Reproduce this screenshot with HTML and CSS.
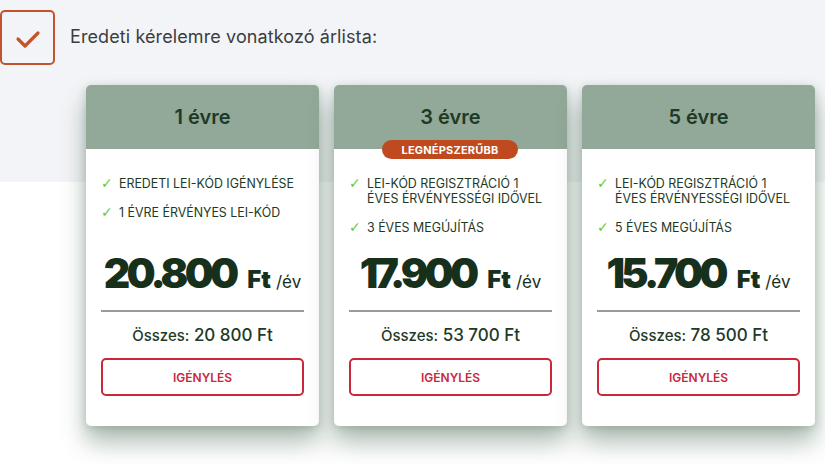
FILE: index.html
```html
<!DOCTYPE html>
<html lang="hu">
<head>
<meta charset="utf-8">
<title>Árlista</title>
<link rel="stylesheet" href="styles.css">
</head>
<body>
<div class="page">
  <div class="intro">
    <div class="checkbox">
      <svg width="26" height="20" viewBox="0 0 26 20"><path d="M3 10 L10 17 L23 4" fill="none" stroke="#c4532b" stroke-width="3.2" stroke-linecap="round" stroke-linejoin="round"/></svg>
    </div>
    <div class="intro-text">Eredeti kérelemre vonatkozó árlista:</div>
  </div>
  <div class="cards">
    <div class="card">
      <div class="card-head">1 évre</div>
      <div class="card-body">
        <ul class="features">
          <li><span class="tick">✓</span><span>EREDETI LEI-KÓD IGÉNYLÉSE</span></li>
          <li><span class="tick">✓</span><span>1 ÉVRE ÉRVÉNYES LEI-KÓD</span></li>
        </ul>
        <div class="price"><span class="amount">20.800</span><span class="cur">Ft</span><span class="per">/év</span></div>
        <div class="divider"></div>
        <div class="total"><span class="total-label">Összes:</span> <span class="total-num">20 800 Ft</span></div>
        <button class="btn">IGÉNYLÉS</button>
      </div>
    </div>
    <div class="card">
      <div class="card-head">3 évre</div>
      <div class="badge">LEGNÉPSZERŰBB</div>
      <div class="card-body">
        <ul class="features">
          <li><span class="tick">✓</span><span>LEI-KÓD REGISZTRÁCIÓ 1<br>ÉVES ÉRVÉNYESSÉGI IDŐVEL</span></li>
          <li><span class="tick">✓</span><span>3 ÉVES MEGÚJÍTÁS</span></li>
        </ul>
        <div class="price"><span class="amount">17.900</span><span class="cur">Ft</span><span class="per">/év</span></div>
        <div class="divider"></div>
        <div class="total"><span class="total-label">Összes:</span> <span class="total-num">53 700 Ft</span></div>
        <button class="btn">IGÉNYLÉS</button>
      </div>
    </div>
    <div class="card">
      <div class="card-head">5 évre</div>
      <div class="card-body">
        <ul class="features">
          <li><span class="tick">✓</span><span>LEI-KÓD REGISZTRÁCIÓ 1<br>ÉVES ÉRVÉNYESSÉGI IDŐVEL</span></li>
          <li><span class="tick">✓</span><span>5 ÉVES MEGÚJÍTÁS</span></li>
        </ul>
        <div class="price"><span class="amount">15.700</span><span class="cur">Ft</span><span class="per">/év</span></div>
        <div class="divider"></div>
        <div class="total"><span class="total-label">Összes:</span> <span class="total-num">78 500 Ft</span></div>
        <button class="btn">IGÉNYLÉS</button>
      </div>
    </div>
  </div>
</div>
</body>
</html>
```
FILE: styles.css
```css
* { box-sizing: border-box; }
html, body { margin: 0; padding: 0; }
body {
  font-family: Inter, "Liberation Sans", sans-serif;
  background: #ffffff;
  width: 825px;
  height: 464px;
  overflow: hidden;
}
.page {
  background: linear-gradient(to bottom, #f3f4f7 0, #f3f4f7 182px, #ffffff 182px);
  height: 464px;
}
.intro {
  display: flex;
  align-items: center;
  padding-top: 10px;
}
.checkbox {
  width: 55px;
  height: 55px;
  border: 2px solid #c4532b;
  border-radius: 5px;
  display: flex;
  align-items: center;
  justify-content: center;
  padding-top: 2px;
}
.intro-text {
  margin-left: 15px;
  margin-top: -2px;
  font-size: 18px;
  color: #3b3d40;
  letter-spacing: 0.1px;
}
.cards {
  display: flex;
  gap: 15px;
  margin-top: 20px;
  padding-left: 86px;
}
.card {
  position: relative;
  width: 233px;
  height: 341px;
  background: #fff;
  border-radius: 5px;
  box-shadow: 0 16px 24px rgba(70, 105, 80, 0.45), 0 2px 8px rgba(70,105,80,0.25);
}
.card-head {
  height: 64px;
  background: #92a898;
  border-radius: 5px 5px 0 0;
  display: flex;
  align-items: center;
  justify-content: center;
  font-size: 20px;
  font-weight: 600;
  color: #1e3a26;
}
.badge {
  position: absolute;
  top: 55px;
  left: 48px;
  width: 136px;
  height: 19px;
  border-radius: 10px;
  background: #bf4a1f;
  color: #fff;
  font-size: 11px;
  font-weight: 700;
  display: flex;
  align-items: center;
  justify-content: center;
  letter-spacing: 0.2px;
}
.card-body {
  padding: 27px 15px 30px;
  display: flex;
  flex-direction: column;
}
.features {
  list-style: none;
  margin: 0;
  padding: 0;
  height: 77px;
}
.features li {
  display: flex;
  font-size: 12.4px;
  line-height: 15px;
  color: #1e3a26;
  margin-bottom: 14px;
}
.tick {
  color: #6cc83a;
  width: 18px;
  flex: none;
  font-family: "DejaVu Sans", sans-serif;
  font-size: 14px;
  font-weight: 700;
  line-height: 15px;
}
.price {
  height: 40px;
  display: flex;
  align-items: baseline;
  justify-content: center;
  color: #16301c;
  line-height: 40px;
}
.amount {
  font-size: 41px;
  font-weight: 900;
  letter-spacing: -3.8px;
}
.cur {
  font-size: 24px;
  font-weight: 900;
  margin-left: 12px;
}
.per {
  font-size: 17px;
  margin-left: 5px;
}
.divider {
  margin-top: 17px;
  height: 2px;
  background: #9a9a9a;
}
.total {
  margin-top: 13px;
  height: 20px;
  line-height: 20px;
  text-align: center;
  color: #1e3a26;
}
.total-label {
  font-size: 15px;
  font-weight: 500;
}
.total-num {
  font-size: 17px;
  font-weight: 500;
}
.btn {
  margin-top: 13px;
  height: 38px;
  width: 100%;
  border: 2px solid #c8283a;
  border-radius: 5px;
  background: #fff;
  color: #c8283a;
  font-family: Inter, "Liberation Sans", sans-serif;
  font-size: 12px;
  font-weight: 600;
  cursor: pointer;
}
```
